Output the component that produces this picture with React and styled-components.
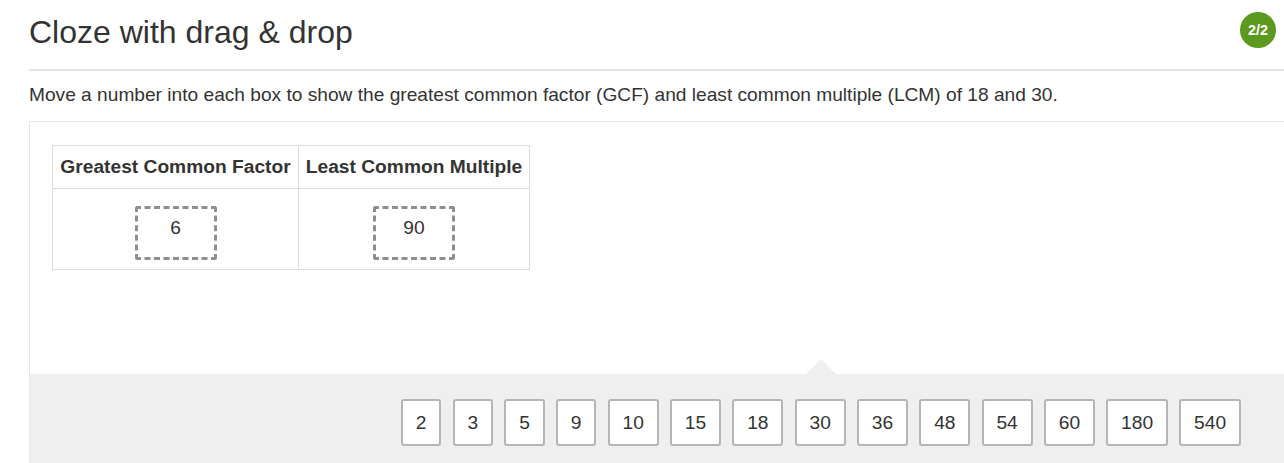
import React from "react";
import styled, { createGlobalStyle } from "styled-components";

const GlobalStyle = createGlobalStyle`
  html, body {
    margin: 0;
    padding: 0;
    overflow: hidden;
    background: #fff;
  }
  body {
    font-family: "Liberation Sans", Arial, sans-serif;
    font-size: 19.2px;
    line-height: 1.4286;
    color: #333;
  }
`;

const Viewport = styled.div`
  width: 100%;
  overflow: hidden;
`;

const Page = styled.div`
  width: 1584px;
  padding: 13px 0 0 29px;
`;

const Header = styled.div`
  display: flex;
  justify-content: space-between;
  align-items: flex-start;
  width: 1247px;
`;

const Title = styled.h1`
  margin: 0;
  font-size: 32px;
  font-weight: normal;
  line-height: 38px;
  color: #333;
`;

const Badge = styled.div`
  width: 36px;
  height: 36px;
  margin-top: -1px;
  border-radius: 50%;
  background: #5b9a1f;
  color: #fff;
  font-size: 14.4px;
  font-weight: bold;
  display: flex;
  align-items: center;
  justify-content: center;
`;

const Rule = styled.div`
  height: 2px;
  margin-top: 18px;
  background: #e2e2e2;
`;

const Instruction = styled.p`
  margin: 10px 0 13px;
  font-size: 19.15px;
  line-height: 27.4px;
`;

const Panel = styled.div`
  border: 1px solid #e6e6e6;
  border-bottom: none;
`;

const ResponseArea = styled.div`
  height: 252px;
  box-sizing: border-box;
  padding: 23px 22px;
`;

const Table = styled.table`
  width: 475px;
  table-layout: fixed;
  border-collapse: collapse;
  border: 1px solid #dcdcdc;
`;

const HeadCell = styled.th`
  width: ${(p) => p.$w}px;
  padding: 7px 0;
  border: 1px solid #dcdcdc;
  font-weight: bold;
  line-height: 27.4px;
  text-align: center;
  color: #333;
  white-space: nowrap;
`;

const BodyCell = styled.td`
  padding: 17px 8px 9px;
  border: 1px solid #dcdcdc;
  text-align: center;
  vertical-align: top;
`;

const DropBox = styled.div`
  display: inline-block;
  width: 82px;
  height: 54px;
  box-sizing: border-box;
  padding-top: 5px;
  border: 3px dashed #8e8e8e;
  border-radius: 3px;
  line-height: 27.4px;
  text-align: center;
  vertical-align: top;
`;

const Tray = styled.div`
  position: relative;
  background: #efefef;
  padding: 25px 0 20px;
  display: flex;
  justify-content: center;
  gap: 11.4px;

  &::before {
    content: "";
    position: absolute;
    top: -15px;
    left: 50%;
    transform: translateX(-50%);
    border-left: 15px solid transparent;
    border-right: 15px solid transparent;
    border-bottom: 15px solid #efefef;
  }
`;

const Tile = styled.div`
  background: #fff;
  border: 2px solid #b5b5b5;
  border-radius: 3px;
  padding: 7.6px 12.8px;
  line-height: 27.4px;
  color: #333;
`;

const choices = [2, 3, 5, 9, 10, 15, 18, 30, 36, 48, 54, 60, 180, 540];

export default function App() {
  return (
    <Viewport>
      <GlobalStyle />
      <Page>
        <Header>
          <Title>Cloze with drag &amp; drop</Title>
          <Badge>2/2</Badge>
        </Header>
        <Rule />
        <Instruction>
          Move a number into each box to show the greatest common factor (GCF) and least common
          multiple (LCM) of 18 and 30.
        </Instruction>
        <Panel>
          <ResponseArea>
            <Table>
              <thead>
                <tr>
                  <HeadCell $w={245}>Greatest Common Factor</HeadCell>
                  <HeadCell $w={230}>Least Common Multiple</HeadCell>
                </tr>
              </thead>
              <tbody>
                <tr>
                  <BodyCell>
                    <DropBox>6</DropBox>
                  </BodyCell>
                  <BodyCell>
                    <DropBox>90</DropBox>
                  </BodyCell>
                </tr>
              </tbody>
            </Table>
          </ResponseArea>
          <Tray>
            {choices.map((n) => (
              <Tile key={n}>{n}</Tile>
            ))}
          </Tray>
        </Panel>
      </Page>
    </Viewport>
  );
}
